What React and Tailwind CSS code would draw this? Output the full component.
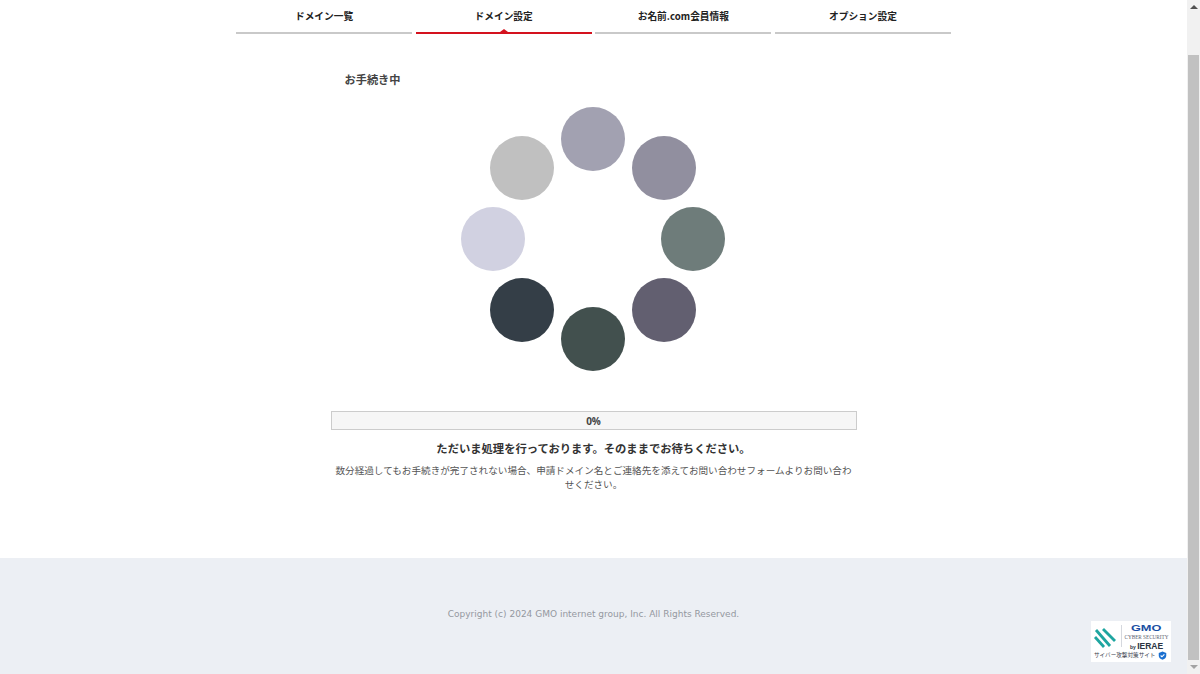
const tabs = [
  { label: "ドメイン一覧" },
  { label: "ドメイン設定", active: true },
  { label: "お名前.com会員情報" },
  { label: "オプション設定" },
];

// 時計回りに上から
const dots = [
  { cx: 100, cy: 0, fill: "#a2a1b1" },
  { cx: 171, cy: 29, fill: "#918f9f" },
  { cx: 200, cy: 100, fill: "#6e7c7a" },
  { cx: 171, cy: 171, fill: "#625f70" },
  { cx: 100, cy: 200, fill: "#42504e" },
  { cx: 29, cy: 171, fill: "#343e47" },
  { cx: 0, cy: 100, fill: "#d1d1e1" },
  { cx: 29, cy: 29, fill: "#c0c0c0" },
];

function Spinner() {
  return (
    <svg width="266" height="266" viewBox="-33 -33 266 266" className="block">
      {dots.map((d) => (
        <circle key={d.cx + "-" + d.cy} cx={d.cx} cy={d.cy} r="32" fill={d.fill} />
      ))}
    </svg>
  );
}

function Badge() {
  return (
    <div className="fixed left-[1091px] top-[621px] w-[80px] h-[41px] bg-white flex flex-col pt-[3px]">
      <div className="flex h-[27px] w-full">
        <svg width="30" height="27" viewBox="0 0 30 27" className="shrink-0">
          <g stroke="#1ea5a0" strokeWidth="2.8" fill="none">
            <path d="M4 13l9 10" />
            <path d="M5 6l14 16" />
            <path d="M12 5l12 12" />
          </g>
        </svg>
        <div className="w-px h-[22px] mt-[1px] bg-[#d5d8de]" />
        <div className="flex-1 flex flex-col items-center leading-none">
          <span className="text-[8.500px] font-bold text-[#1a4fa3] leading-[8px] scale-x-150 font-['Liberation_Sans',sans-serif]">GMO</span>
          <span className="text-[5.200px] text-[#5a6270] leading-[10px] whitespace-nowrap font-['Liberation_Serif',serif]">CYBER SECURITY</span>
          <span className="text-[8.500px] font-bold text-[#2b3442] leading-[8px] whitespace-nowrap font-['Liberation_Sans',sans-serif]">
            <span className="text-[5px]">by </span>IERAE
          </span>
        </div>
      </div>
      <div className="flex items-center gap-[3px] pl-[3px] w-full">
        <span className="text-[5.600px] leading-[9px] text-[#3c4450] whitespace-nowrap">サイバー攻撃対策サイト</span>
        <svg width="9" height="9" viewBox="0 0 24 24" className="shrink-0">
          <path d="M12 1l10 4v7c0 6-4 9.500-10 11C6 21.500 2 18 2 12V5z" fill="#1a6fd0" />
          <path d="M7 12l3.500 3.500L17 9" fill="none" stroke="#fff" strokeWidth="3" />
        </svg>
      </div>
    </div>
  );
}

function Scrollbar() {
  return (
    <div className="w-[13px] h-[674px] bg-[#f1f1f1] flex flex-col items-center shrink-0">
      <div className="h-[13px] flex items-center justify-center w-full">
        <div className="w-0 h-0 border-x-[4px] border-x-transparent border-b-[4px] border-b-[#505050]" />
      </div>
      <div className="mt-[42px] w-[11px] h-[605px] bg-[#c1c1c1]" />
      <div className="h-[14px] flex items-center justify-center w-full">
        <div className="w-0 h-0 border-x-[4px] border-x-transparent border-t-[4px] border-t-[#a3a3a3]" />
      </div>
    </div>
  );
}

export default function App() {
  return (
    <div className="flex h-[674px] overflow-hidden bg-white font-['Noto_Sans_CJK_JP',sans-serif]">
      <div className="flex-1 min-w-0 flex flex-col">
        <nav className="w-[715px] mx-auto grid grid-cols-4 gap-[3.6px]">
          {tabs.map((t) => (
            <div
              key={t.label}
              className={
                t.active
                  ? "relative h-[34px] flex items-center justify-center border-b-2 border-[#d4121e] text-[9.7px] font-bold text-[#222]"
                  : "relative h-[34px] flex items-center justify-center border-b-2 border-[#c9c9c9] text-[9.7px] font-bold text-[#222]"
              }
            >
              {t.label}
              {t.active && (
                <div className="absolute left-1/2 -translate-x-1/2 bottom-0 w-0 h-0 border-x-[4px] border-x-transparent border-b-[3px] border-b-[#d4121e]" />
              )}
            </div>
          ))}
        </nav>

        <main className="w-[526px] mx-auto flex-1 flex flex-col">
          <h1 className="mt-[37px] pl-[14px] text-[11.2px] leading-[17px] font-bold text-[#444]">お手続き中</h1>
          <div className="flex justify-center mt-[18px] pr-[1px]">
            <Spinner />
          </div>
          <div className="mt-[39px] h-[19px] border border-[#ccc] bg-[#f6f6f6] flex items-end justify-center text-[10px] leading-[15px] font-bold text-[#444] font-['Open_Sans',sans-serif]">
            0%
          </div>
          <p className="mt-[9px] text-center text-[11.3px] leading-[18px] font-bold text-[#333]">
            ただいま処理を行っております。そのままでお待ちください。
          </p>
          <p className="mt-[6px] px-[3px] text-center text-[9.6px] leading-[14px] text-[#555]">
            数分経過してもお手続きが完了されない場合、申請ドメイン名とご連絡先を添えてお問い合わせフォームよりお問い合わせください。
          </p>
        </main>

        <footer className="h-[116px] bg-[#eceff4] pt-[49px] text-center text-[9px] leading-[15px] text-[#94989f] font-['DejaVu_Sans',sans-serif]">
          Copyright (c) 2024 GMO internet group, Inc. All Rights Reserved.
        </footer>
      </div>
      <Scrollbar />
      <Badge />
    </div>
  );
}
